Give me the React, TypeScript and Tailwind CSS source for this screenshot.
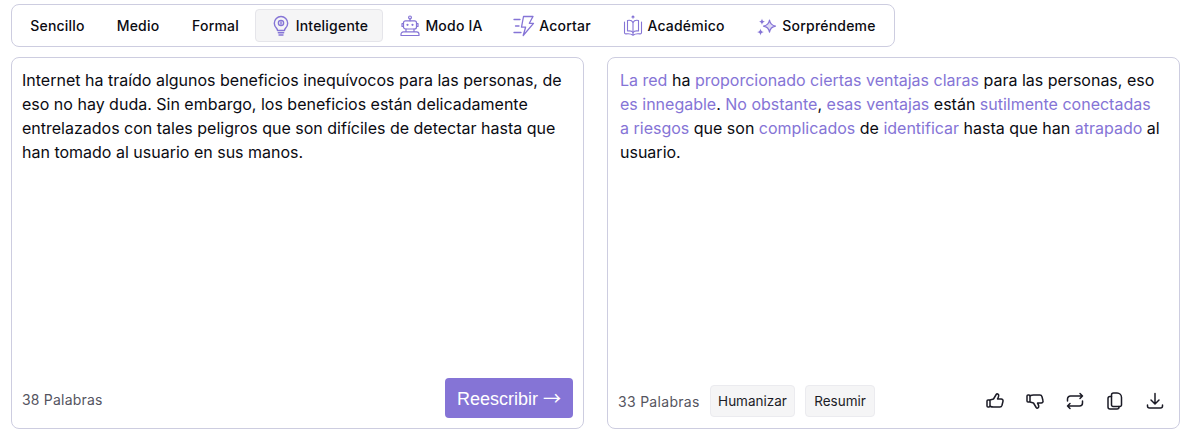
import type { ReactNode } from "react";

const P = "#8574d6";

function Bulb() {
  return (
    <svg width="22" height="22" viewBox="0 0 22 22" fill="none" stroke={P} strokeWidth="1.400" strokeLinecap="round" strokeLinejoin="round">
      <path d="M11 1.500a6.700 6.700 0 0 0-6.700 6.700c0 2.300 1.100 3.800 2.200 5 .7.800 1 1.500 1 2.300h7c0-.8.3-1.500 1-2.300 1.100-1.200 2.200-2.700 2.200-5A6.700 6.700 0 0 0 11 1.500Z" />
      <circle cx="11" cy="8" r="2.600" />
      <path d="M11 6.800v2.400M8.300 17.800h5.400M9 20h4" />
    </svg>
  );
}
function Robot() {
  return (
    <svg width="22" height="22" viewBox="0 0 22 22" fill="none" stroke={P} strokeWidth="1.200" strokeLinecap="round" strokeLinejoin="round">
      <circle cx="11" cy="2.400" r="1.400" />
      <path d="M11 3.800v2" />
      <rect x="4.500" y="5.800" width="13" height="8.200" rx="2" />
      <path d="M4.500 8.500H3v3h1.500M17.500 8.500H19v3h-1.500" />
      <circle cx="8.500" cy="9.800" r="1.100" fill={P} stroke="none" />
      <circle cx="13.500" cy="9.800" r="1.100" fill={P} stroke="none" />
      <path d="M7 14v2.800M15 14v2.800M2 20.500v-1.300a2.300 2.300 0 0 1 2.300-2.300h13.400a2.300 2.300 0 0 1 2.300 2.300v1.300H2ZM6 20.500h10" />
    </svg>
  );
}
function Bolt() {
  return (
    <svg width="22" height="22" viewBox="0 0 22 22" fill="none" stroke={P} strokeWidth="1.300" strokeLinecap="round" strokeLinejoin="round">
      <path d="M10.500 1.500H20l-3.700 6.800h4.200L10.200 20.500l2.400-8.300H8.500l2-10.700Z" />
      <path d="M1 4.500h6M2.500 11h3.500M1 17.500h7" />
    </svg>
  );
}
function Book() {
  return (
    <svg width="20" height="22" viewBox="0 0 20 22" fill="none" stroke={P} strokeWidth="1.100" strokeLinecap="round" strokeLinejoin="round">
      <path d="M10 1l1 1-1 1-1-1 1-1Z" />
      <path d="M4.500 5.500c2.500-.5 4.500 0 5.500 2 1-2 3-2.500 5.500-2v10.500c-2.500-.4-4.500 0-5.500 1.500-1-1.500-3-1.900-5.500-1.500V5.500Z" />
      <path d="M10 7.500v12M1.500 7v10.500c0 1 .6 1.500 1.500 1.400 2.700-.4 5.200 0 7 1.300 1.800-1.300 4.300-1.700 7-1.300.9.100 1.500-.4 1.500-1.400V7" />
    </svg>
  );
}
function Sparkles() {
  return (
    <svg width="22" height="22" viewBox="0 0 22 22" fill="none">
      <path d="M13.500 5c.6 3.700 2.200 5.500 6 6.100-3.800.6-5.400 2.400-6 6.100-.6-3.700-2.200-5.500-6-6.100 3.800-.6 5.400-2.400 6-6.100Z" stroke={P} strokeWidth="1.200" strokeLinejoin="round" fill="#8574d640" />
      <path d="M6 3.500c.3 2 1.100 2.900 3 3.200-1.900.3-2.700 1.200-3 3.200-.3-2-1.100-2.900-3-3.200 1.900-.3 2.700-1.200 3-3.200ZM4.500 13.500c.4 2.300 1.300 3.200 3.500 3.600-2.200.4-3.100 1.300-3.500 3.400-.4-2.100-1.300-3-3.500-3.400 2.200-.4 3.100-1.300 3.500-3.600Z" fill={P} />
    </svg>
  );
}

const thumb = "M5 9l3.500-1 2.700-4.500c.7-1.100 2.500-.6 2.500.8 0 1.300-.4 2.500-1.200 3.700h3.800c1.200 0 2 1.100 1.700 2.200l-1 4.100c-.3 1-1.100 1.700-2.100 1.700H8.500c-1.300 0-2.400-.3-3.500-.8";

function ThumbUp() {
  return (
    <svg width="20" height="20" viewBox="0 0 20 20" fill="none" stroke="#1b1b26" strokeWidth="1.500" strokeLinecap="round" strokeLinejoin="round">
      <rect x="2" y="9" width="3" height="7" rx="1" />
      <path d={thumb} />
    </svg>
  );
}
function ThumbDown() {
  return (
    <svg width="20" height="20" viewBox="0 0 20 20" fill="none" stroke="#1b1b26" strokeWidth="1.500" strokeLinecap="round" strokeLinejoin="round">
      <g transform="matrix(1 0 0 -1 0 20)">
        <rect x="2" y="9" width="3" height="7" rx="1" />
        <path d={thumb} />
      </g>
    </svg>
  );
}
function RepeatIcon() {
  return (
    <svg width="20" height="20" viewBox="0 0 20 20" fill="none" stroke="#1b1b26" strokeWidth="1.500" strokeLinecap="round" strokeLinejoin="round">
      <path d="M2.500 10V8a3 3 0 0 1 3-3h12m-2.500-2.500L17.500 5 15 7.500M17.500 10v2a3 3 0 0 1-3 3h-12M5 12.500 2.500 15 5 17.500" />
    </svg>
  );
}
function CopyIcon() {
  return (
    <svg width="20" height="20" viewBox="0 0 20 20" fill="none" stroke="#1b1b26" strokeWidth="1.500" strokeLinecap="round" strokeLinejoin="round">
      <path d="M6.500 14V4a2 2 0 0 1 2-2h3.500c2.500 0 4.500 2 4.500 4.500V14a1.500 1.500 0 0 1-1.500 1.500H8a1.500 1.500 0 0 1-1.500-1.500Z" />
      <path d="M6.500 5.500H5a2 2 0 0 0-2 2v8.500a2 2 0 0 0 2 2h7a2 2 0 0 0 2-2v-.5" />
    </svg>
  );
}
function DownloadIcon() {
  return (
    <svg width="20" height="20" viewBox="0 0 20 20" fill="none" stroke="#1b1b26" strokeWidth="1.500" strokeLinecap="round" strokeLinejoin="round">
      <path d="M10 2.500v10M6 9l4 4 4-4M2.500 14v1a2 2 0 0 0 2 2h11a2 2 0 0 0 2-2v-1" />
    </svg>
  );
}

type Seg = [string, boolean];
const segments: Seg[] = [
  ["La red", true], [" ha ", false], ["proporcionado ciertas ventajas claras", true], [" para las personas, eso ", false],
  ["es innegable", true], [". ", false], ["No obstante", true], [", ", false], ["esas ventajas", true], [" están ", false],
  ["sutilmente conectadas a riesgos", true], [" que son ", false], ["complicados", true], [" de ", false], ["identificar", true],
  [" hasta que han ", false], ["atrapado", true], [" al usuario.", false],
];

const tabs: { label: string; icon?: ReactNode; active?: boolean; cls: string }[] = [
  { label: "Sencillo", cls: "w-[85px]" },
  { label: "Medio", cls: "w-[76px]" },
  { label: "Formal", cls: "w-[79px]" },
  { label: "Inteligente", icon: <Bulb />, active: true, cls: "w-[128px]" },
  { label: "Modo IA", icon: <Robot />, cls: "w-[116px]" },
  { label: "Acortar", icon: <Bolt />, cls: "w-[106px]" },
  { label: "Académico", icon: <Book />, cls: "w-[138px]" },
  { label: "Sorpréndeme", icon: <Sparkles />, cls: "w-[146px]" },
];

export default function App() {
  return (
    <div className="w-[1191px] h-[437px] bg-white pt-1 pl-[11px] font-['Inter',sans-serif] text-[14px] text-[#0b0b12] overflow-hidden">
      <div className="w-[884px] h-[43px] border border-[#cdcde0] rounded-lg flex items-center pl-[3px]">
        {tabs.map((t) => (
          <div
            key={t.label}
            className={`h-[33px] flex items-center justify-center gap-1 rounded font-medium text-[14px] tracking-[0.2px] ${t.cls} ${t.active ? "bg-[#f5f5f6] border border-[#e5e5ea]" : ""}`}
          >
            {t.icon}
            <span>{t.label}</span>
          </div>
        ))}
      </div>
      <div className="flex gap-[23px] mt-[10px] w-[1169px]">
        <div className="w-[573px] h-[372px] border border-[#cdcde0] rounded-lg flex flex-col justify-between pt-[10px] pl-[10px] pr-[10px] pb-[10px]">
          <p className="text-[16px] leading-6 text-[#0b0b12]">
            Internet ha traído algunos beneficios inequívocos para las personas, de eso no hay duda. Sin embargo, los beneficios están delicadamente entrelazados con tales peligros que son difíciles de detectar hasta que han tomado al usuario en sus manos.
          </p>
          <div className="flex items-center justify-between">
            <span className="text-[14px] tracking-[0.2px] text-[#55555f] mt-[2px]">38 Palabras</span>
            <button className="w-[128px] h-10 rounded bg-[#8574d6] text-white text-[18px] leading-none font-['Liberation_Sans',sans-serif]">
              Reescribir <span className="leading-none font-['Noto_Sans_CJK_JP',sans-serif]">→</span>
            </button>
          </div>
        </div>
        <div className="w-[573px] h-[372px] border border-[#cdcde0] rounded-lg flex flex-col justify-between pt-[10px] pl-[12px] pr-[10px] pb-[11px]">
          <p className="w-[542px] text-[16px] leading-6 text-[#0b0b12]">
            {segments.map(([s, h], i) => (h ? <span key={i} className="text-[#8574d6]">{s}</span> : <span key={i}>{s}</span>))}
          </p>
          <div className="flex items-center -ml-[2px]">
            <span className="text-[14px] tracking-[0.3px] text-[#55555f] w-[82px] mr-[10px] whitespace-nowrap">33 Palabras</span>
            <button className="w-[85px] h-8 rounded bg-[#f5f5f6] border border-[#ebebef] text-[13.500px] text-[#1b1b26] mr-[10px]">Humanizar</button>
            <button className="w-[70px] h-8 rounded bg-[#f5f5f6] border border-[#ebebef] text-[13.500px] text-[#1b1b26]">Resumir</button>
            <div className="ml-auto flex items-center gap-5 pr-[4px]">
              <ThumbUp />
              <ThumbDown />
              <RepeatIcon />
              <CopyIcon />
              <DownloadIcon />
            </div>
          </div>
        </div>
      </div>
    </div>
  );
}
